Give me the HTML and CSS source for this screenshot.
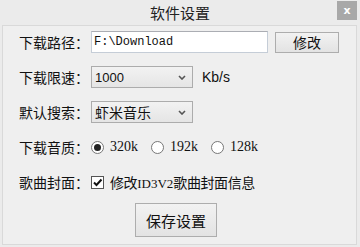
FILE: index.html
```html
<!DOCTYPE html>
<html lang="zh-CN">
<head>
  <meta charset="UTF-8">
  <title>软件设置</title>
  <link rel="stylesheet" href="styles.css">
</head>
<body>
  <div class="window">
    <div class="titlebar">
      <span class="title">软件设置</span>
      <span class="close">x</span>
    </div>

    <div class="panel">
      <div class="row">
        <span class="label">下载路径：</span>
        <div class="textbox">F:\Download</div>
        <button class="btn btn-small">修改</button>
      </div>

      <div class="row">
        <span class="label">下载限速：</span>
        <div class="select"><span class="select-text">1000</span>
          <svg class="arrow" width="8" height="5" viewBox="0 0 8 5"><path d="M1 1 L4 4 L7 1" fill="none" stroke="#555" stroke-width="1.6"/></svg>
        </div>
        <span class="unit">Kb/s</span>
      </div>

      <div class="row">
        <span class="label">默认搜索：</span>
        <div class="select"><span class="select-text cn">虾米音乐</span>
          <svg class="arrow" width="8" height="5" viewBox="0 0 8 5"><path d="M1 1 L4 4 L7 1" fill="none" stroke="#555" stroke-width="1.6"/></svg>
        </div>
      </div>

      <div class="row">
        <span class="label">下载音质：</span>
        <div class="options">
          <span class="radio checked"></span><span class="opt">320k</span>
          <span class="radio"></span><span class="opt">192k</span>
          <span class="radio"></span><span class="opt">128k</span>
        </div>
      </div>

      <div class="row">
        <span class="label">歌曲封面：</span>
        <span class="checkbox">
          <svg width="11" height="11" viewBox="0 0 11 11"><path d="M2 5.5 L4.5 8 L9.5 2.5" fill="none" stroke="#111" stroke-width="2"/></svg>
        </span>
        <span class="check-text">修改<span class="mono">ID3V2</span>歌曲封面信息</span>
      </div>

      <div class="footer">
        <button class="btn btn-save">保存设置</button>
      </div>
    </div>
  </div>
</body>
</html>
```

FILE: styles.css
```css
/* general */
body {
  margin: 0;
  background-color: #ebebeb;
  font-family: "Noto Sans CJK SC", "Noto Sans", sans-serif;
  color: #111;
}

.window {
  width: 360px;
  height: 247px;
  display: flex;
  flex-direction: column;
}

/* title bar */
.titlebar {
  position: relative;
  height: 25px;
  display: flex;
  justify-content: center;
  align-items: center;
}

.title {
  font-size: 15px;
  color: #222;
  line-height: 1;
}

.close {
  position: absolute;
  top: 1px;
  right: 3px;
  width: 20px;
  height: 19px;
  background-color: #a8a8a8;
  color: #fff;
  font-family: "DejaVu Sans", sans-serif;
  font-weight: bold;
  font-size: 11px;
  display: flex;
  align-items: center;
  justify-content: center;
}

/* main panel */
.panel {
  margin: 0 3px 2px 2px;
  flex: 1;
  border: 1px solid #d9d9d9;
  background-color: #efefef;
  padding: 0 0 0 16px;
  display: flex;
  flex-direction: column;
}

.row {
  height: 32px;
  display: flex;
  align-items: center;
  margin-top: 3px;
}

.row:first-child {
  margin-top: 0;
}

.label {
  width: 72px;
  font-size: 14px;
  line-height: 1;
  flex-shrink: 0;
}

/* text box */
.textbox {
  width: 173px;
  height: 20px;
  border: 1px solid #c5cdd7;
  border-top-color: #abadb3;
  background-color: #fff;
  font-family: "Liberation Mono", monospace;
  font-size: 12px;
  line-height: 20px;
  padding-left: 2px;
}

/* buttons */
.btn {
  border: 1px solid #adadad;
  background: linear-gradient(#f2f2f2, #e3e3e3);
  font-family: "Noto Sans CJK SC", sans-serif;
  color: #111;
  padding: 0;
}

.btn-small {
  width: 64px;
  height: 21px;
  margin-left: 7px;
  font-size: 14px;
  line-height: 1;
}

/* drop down */
.select {
  border: 1px solid #acacac;
  background: linear-gradient(#f2f2f2, #e5e5e5);
  display: flex;
  align-items: center;
  justify-content: space-between;
  padding: 0 6px 0 3px;
  box-sizing: border-box;
  width: 102px;
  height: 22px;
}

.select-text {
  font-family: "Liberation Sans", sans-serif;
  font-size: 13px;
}

.select-text.cn {
  font-family: "Noto Sans CJK SC", sans-serif;
  font-size: 14px;
}

.unit {
  margin-left: 9px;
  font-family: "Liberation Sans", sans-serif;
  font-size: 14px;
}

/* radio buttons */
.options {
  display: flex;
  align-items: center;
}

.radio {
  width: 11px;
  height: 11px;
  border: 1px solid #777;
  border-radius: 50%;
  background-color: #fff;
  position: relative;
}

.radio.checked::after {
  content: "";
  position: absolute;
  left: 2px;
  top: 2px;
  width: 7px;
  height: 7px;
  border-radius: 50%;
  background-color: #222;
}

.opt {
  font-family: "Liberation Serif", serif;
  font-size: 14px;
  margin-left: 6px;
  width: 41px;
}

/* checkbox */
.checkbox {
  width: 11px;
  height: 11px;
  border: 1px solid #555;
  background-color: #fff;
  display: flex;
  align-items: center;
  justify-content: center;
}

.check-text {
  margin-left: 6px;
  font-size: 14px;
  letter-spacing: -0.4px;
}

.mono {
  font-family: "Liberation Serif", serif;
  font-size: 13px;
  letter-spacing: 0;
}

/* footer */
.footer {
  display: flex;
  padding-left: 116px;
  margin-top: 5px;
}

.btn-save {
  width: 82px;
  height: 34px;
  font-size: 15px;
}
```
